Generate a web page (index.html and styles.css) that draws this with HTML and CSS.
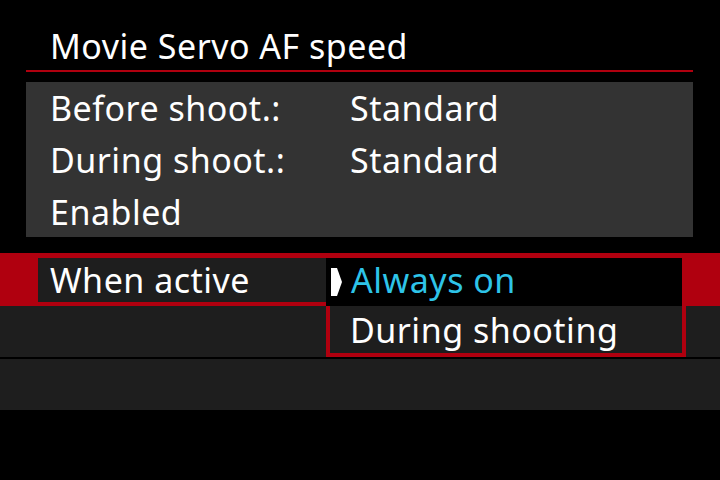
FILE: index.html
```html
<!DOCTYPE html>
<html lang="en">
<head>
  <meta charset="UTF-8">
  <title>Movie Servo AF speed</title>
  <link rel="stylesheet" href="styles.css">
</head>
<body>
  <div class="screen">
    <h1 class="title">Movie Servo AF speed</h1>
    <div class="rule"></div>

    <!-- current settings -->
    <div class="summary">
      <div class="line"><span class="key">Before shoot.:</span><span>Standard</span></div>
      <div class="line"><span class="key">During shoot.:</span><span>Standard</span></div>
      <div class="line"><span class="key">Enabled</span></div>
    </div>

    <!-- menu -->
    <div class="menu">
      <div class="row sel">
        <div class="sel-box">When active</div>
      </div>
      <div class="row"></div>
      <div class="row"></div>

      <div class="dropdown">
        <div class="opt on">
          <svg class="pointer" width="11" height="28" viewBox="0 0 11 28"><polygon points="0,0 6,0 11,14 6,28 0,28" fill="#fff"/></svg>
          Always on
        </div>
        <div class="opt">During shooting</div>
      </div>
    </div>
  </div>
</body>
</html>
```
FILE: styles.css
```css
body { margin: 0; background: #000; font-family: "Noto Sans", "Open Sans", sans-serif; color: #fff; font-size: 34px; letter-spacing: 0.5px; }
.screen { width: 720px; height: 480px; overflow: hidden; }
.title { margin: 0; height: 70px; padding: 0 0 0 50px; font-size: 34px; font-weight: normal; line-height: 92px; box-sizing: border-box; }
.rule { height: 2px; background: #b0000f; margin: 0 27px 0 26px; }
.summary { margin: 10px 27px 0 26px; height: 155px; background: #333; padding: 0 0 0 24px; box-sizing: border-box; }
.line { display: flex; height: 52px; line-height: 52px; }
.key { width: 300px; }
.menu { position: relative; margin-top: 16px; }
.row { height: 51px; background: #1e1e1e; margin-bottom: 2px; }
.row.sel { height: 53px; margin-bottom: 0; background: #b0000f; padding: 5px 0 4px 38px; box-sizing: border-box; }
.sel-box { width: 288px; height: 44px; background: #1e1e1e; padding-left: 12px; line-height: 44px; box-sizing: border-box; }
.dropdown { position: absolute; left: 326px; top: 0; width: 360px; border: 4px solid #b0000f; border-top-width: 5px; box-sizing: border-box; }
.opt { height: 47px; line-height: 45px; padding: 2px 0 0 20px; background: #1e1e1e; box-sizing: border-box; }
.opt.on { height: 48px; line-height: 44px; margin-left: -4px; padding: 0 0 4px 5px; background: #000; color: #2ec4e8; display: flex; align-items: center; gap: 9px; }
.pointer { flex: none; margin-top: 4px; }
```
